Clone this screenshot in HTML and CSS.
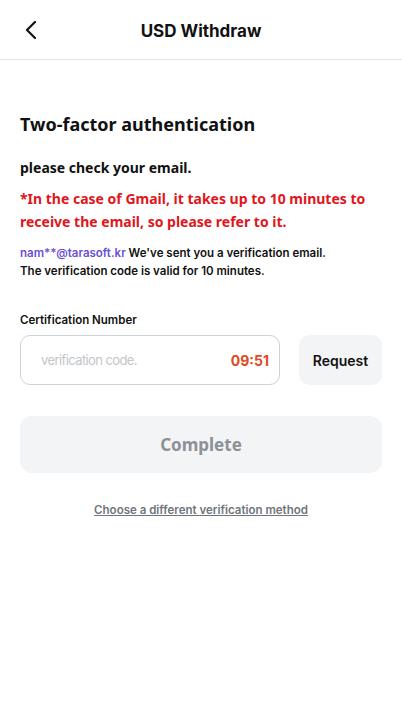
FILE: index.html
```html
<!DOCTYPE html>
<html lang="en">
<head>
    <meta charset="UTF-8">
    <meta name="viewport" content="width=device-width, initial-scale=1.0">
    <title>USD Withdraw</title>
    <link rel="stylesheet" href="styles.css">
</head>
<body>
    <div class="header">
        <button class="back">
            <svg width="14" height="20" viewBox="0 0 14 20"><path d="M11 2 L3 10 L11 18" fill="none" stroke="#111" stroke-width="2.2" stroke-linecap="round" stroke-linejoin="round"/></svg>
        </button>
        <h1>USD Withdraw</h1>
    </div>
    <div class="content">
        <h2>Two-factor authentication</h2>
        <p class="check">please check your email.</p>
        <p class="warn">*In the case of Gmail, it takes up to 10 minutes to receive the email, so please refer to it.</p>
        <p class="sent"><span class="mail">nam**@tarasoft.kr</span> We've sent you a verification email.<br>The verification code is valid for 10 minutes.</p>
        <label class="label">Certification Number</label>
        <div class="code-row">
            <div class="code-box">
                <input type="text" placeholder="verification code.">
                <span class="timer">09:51</span>
            </div>
            <button class="request">Request</button>
        </div>
        <button class="complete">Complete</button>
        <a class="other" href="#">Choose a different verification method</a>
    </div>
</body>
</html>
```

FILE: styles.css
```css
body {
    margin: 0;
    background: #fff;
    font-family: Inter, "Noto Sans", sans-serif;
    color: #111;
}
.header {
    height: 59px;
    border-bottom: 1px solid #e6e6e6;
    display: flex;
    align-items: center;
    justify-content: center;
    position: relative;
}
.back {
    position: absolute;
    left: 20px;
    top: 20px;
    border: none;
    background: none;
    padding: 0 4px;
    cursor: pointer;
}
.header h1 {
    margin: 0;
    font-size: 17px;
    font-weight: 700;
    padding-top: 2px;
}
.content {
    padding: 50px 20px 0;
}
h2 {
    margin: 0;
    font-family: "Noto Sans", sans-serif;
    font-size: 18px;
    font-weight: 700;
    line-height: 28px;
}
.check {
    margin: 20px 0 0;
    font-family: "Noto Sans", sans-serif;
    font-size: 14px;
    font-weight: 700;
    line-height: 20px;
}
.warn {
    margin: 9px 0 0;
    font-family: "Noto Sans", sans-serif;
    font-size: 14px;
    font-weight: 700;
    line-height: 23px;
    color: #e0161c;
}
.sent {
    margin: 11px 0 0;
    font-size: 11.5px;
    font-weight: 600;
    line-height: 18px;
}
.mail {
    color: #6b4fd3;
}
.label {
    display: block;
    margin-top: 33px;
    font-size: 11.5px;
    font-weight: 600;
}
.code-row {
    display: flex;
    gap: 19px;
    margin-top: 8px;
}
.code-box {
    flex: 1;
    min-width: 0;
    height: 48px;
    border: 1px solid #cfd2d6;
    border-radius: 10px;
    display: flex;
    align-items: center;
    padding: 0 10px 0 20px;
}
.code-box input {
    flex: 1;
    min-width: 0;
    width: 0;
    border: none;
    outline: none;
    font-family: Inter, sans-serif;
    font-size: 13px;
    letter-spacing: -0.6px;
    background: none;
    padding: 0;
}
.code-box input::placeholder {
    color: #c3c6ca;
}
.timer {
    color: #e04a24;
    font-size: 14px;
    font-weight: 700;
}
.request {
    flex-shrink: 0;
    width: 83px;
    height: 50px;
    border: none;
    border-radius: 10px;
    background: #f3f4f6;
    font-family: Inter, sans-serif;
    font-size: 14px;
    font-weight: 600;
    color: #111;
}
.complete {
    display: block;
    width: 100%;
    height: 57px;
    margin-top: 31px;
    border: none;
    border-radius: 12px;
    background: #f3f4f6;
    font-family: "Noto Sans", sans-serif;
    font-size: 17px;
    font-weight: 700;
    color: #8b9197;
}
.other {
    display: block;
    width: max-content;
    margin: 30px auto 0;
    font-size: 11.5px;
    font-weight: 600;
    color: #6f757c;
}
```
